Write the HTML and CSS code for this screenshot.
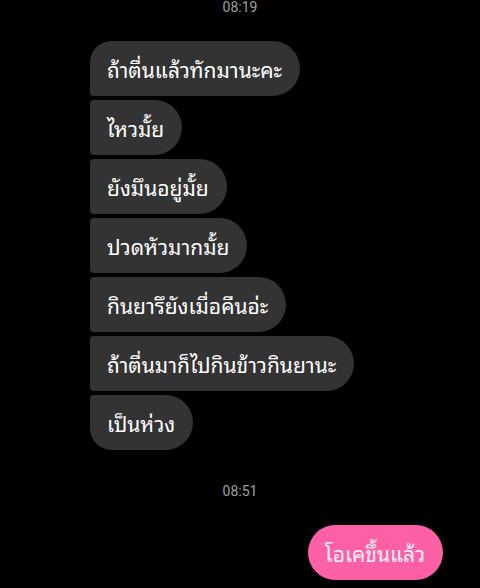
FILE: index.html
```html
<!DOCTYPE html>
<html lang="th">
<head>
    <meta charset="UTF-8">
    <meta name="viewport" content="width=device-width, initial-scale=1.0">
    <title>Chat</title>
    <link rel="stylesheet" href="styles.css">
</head>
<body>

<div class="chat">
    <div class="time">08:19</div>

    <div class="group received">
        <div class="bubble first">ถ้าตื่นแล้วทักมานะคะ</div>
        <div class="bubble">ไหวมั้ย</div>
        <div class="bubble">ยังมึนอยู่มั้ย</div>
        <div class="bubble">ปวดหัวมากมั้ย</div>
        <div class="bubble">กินยารึยังเมื่อคืนอ่ะ</div>
        <div class="bubble">ถ้าตื่นมาก็ไปกินข้าวกินยานะ</div>
        <div class="bubble last">เป็นห่วง</div>
    </div>

    <div class="time later">08:51</div>

    <div class="group sent">
        <div class="bubble mine">โอเคขึ้นแล้ว</div>
    </div>
</div>

</body>
</html>
```

FILE: styles.css
```css
body {
    margin: 0;
    padding: 0;
    background-color: #000;
    color: white;
    font-family: 'Noto Sans Thai Looped', 'Loma', 'Garuda', 'Noto Sans', 'Open Sans', sans-serif;
    height: 588px;
    overflow: hidden;
}

.chat {
    display: flex;
    flex-direction: column;
}

.time {
    text-align: center;
    font-family: 'Roboto', sans-serif;
    font-size: 14px;
    line-height: 14px;
    color: #a0a0a0;
}

.time.later {
    margin-top: 34px;
}

.group {
    display: flex;
    flex-direction: column;
    gap: 4px;
}

.received {
    align-items: flex-start;
    padding-left: 90px;
    margin-top: 27px;
}

.sent {
    align-items: flex-end;
    padding-right: 37px;
    margin-top: 27px;
}

.bubble {
    height: 55px;
    display: flex;
    align-items: center;
    padding: 0 18px 0 17px;
    font-size: 21px;
    background-color: #333;
    border-radius: 4px 28px 28px 4px;
    box-sizing: border-box;
}

.bubble.first {
    border-top-left-radius: 22px;
}

.bubble.last {
    border-bottom-left-radius: 22px;
}

.bubble.mine {
    background-color: #fe60a6;
    color: #fff0f6;
    border-radius: 28px;
}
```
